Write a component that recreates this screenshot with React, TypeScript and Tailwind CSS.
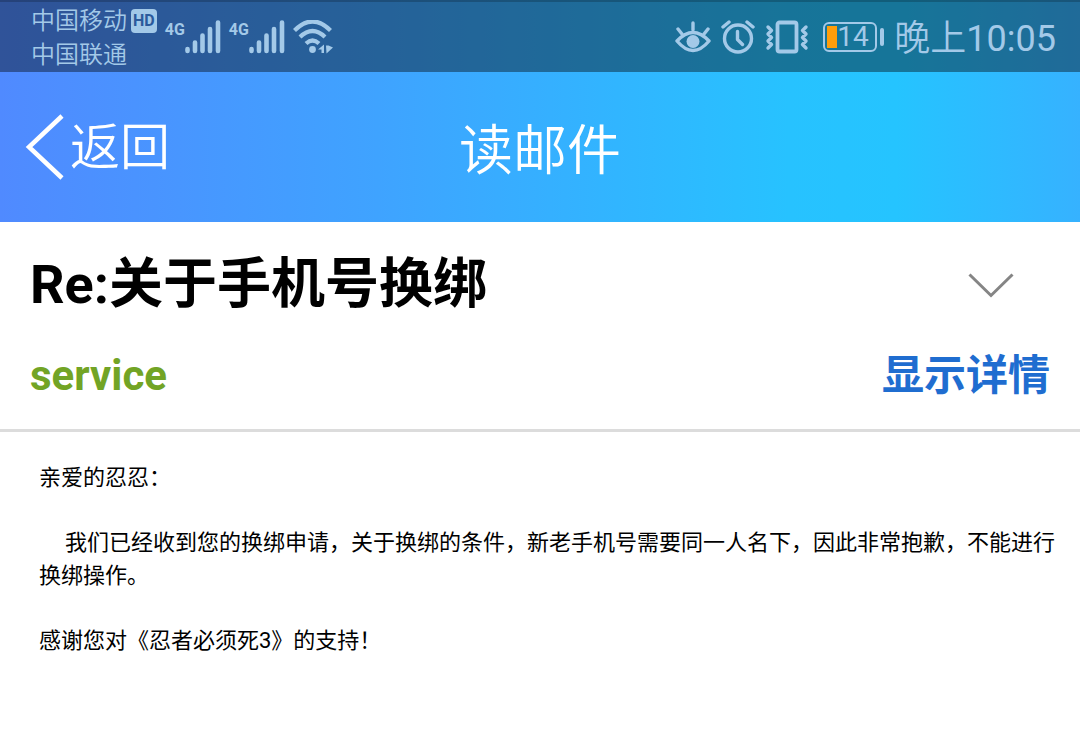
import type { ReactNode } from "react";

function Signal() {
  return (
    <div className="flex items-start">
      <span className="text-base leading-5 font-bold">4G</span>
      <svg width="36" height="34" viewBox="0 0 36 34" stroke="currentColor" strokeWidth="4.6" strokeLinecap="round" aria-hidden="true">
        <path d="M2.5 29v2M10 22.500v8.500M17.500 15.500v15.500M25 9v22M33 2.500v28.500" />
      </svg>
    </div>
  );
}

function WifiIcon() {
  return (
    <svg width="40" height="34" viewBox="0 0 40 34" fill="none" stroke="currentColor" strokeWidth="4" aria-hidden="true">
      <path d="M1.500 10.500Q19.500-7.500 37.500 10.500M7 17Q19.500 5 32 17M13 23.500Q19.500 17.500 26 23.500" strokeWidth="4.200" />
      <circle cx="19.500" cy="29.500" r="3.400" fill="currentColor" stroke="none" />
      <path d="M25 29.500l6-5v8.500h-2.500v-3.500zM33 25.500h2.500l4.500 2-6.500 6z" fill="currentColor" stroke="none" />
    </svg>
  );
}

function EyeIcon() {
  return (
    <svg width="36" height="34" viewBox="0 0 36 34" fill="none" stroke="currentColor" strokeWidth="3.400" strokeLinecap="round" strokeLinejoin="round" aria-hidden="true">
      <path d="M2 21Q18 4 34 21Q18 40 2 21zM18 3v7M3 9l4 5M33 9l-4 5" />
      <circle cx="18" cy="21.500" r="6.500" fill="currentColor" stroke="none" />
    </svg>
  );
}

function AlarmIcon() {
  return (
    <svg width="34" height="34" viewBox="0 0 34 34" fill="none" stroke="currentColor" strokeWidth="3.400" strokeLinecap="round" strokeLinejoin="round" aria-hidden="true">
      <circle cx="17" cy="18.500" r="13.500" />
      <path d="M2 7l6-5M26 2l6 5M16.500 11.500v8l5 5" />
    </svg>
  );
}

function VibrateIcon() {
  return (
    <svg width="44" height="34" viewBox="0 0 44 34" fill="none" stroke="currentColor" strokeWidth="3.400" strokeLinecap="round" strokeLinejoin="round" aria-hidden="true">
      <rect x="12.500" y="2.500" width="19" height="29" rx="2" strokeWidth="3.800" />
      <path d="M3 7l3.500 3.500-3.500 3.500 3.500 3.500-3.500 3.500 3.500 3.500-3.500 3.500M41 7l-3.500 3.500 3.500 3.500-3.500 3.500 3.500 3.500-3.500 3.500 3.500 3.500" />
    </svg>
  );
}

function Battery({ level }: { level: number }) {
  return (
    <div className="ml-1 flex items-center gap-[3px]">
      <div className="flex h-[30px] w-[54px] items-center rounded-md border-2 border-current px-0.5">
        <div className="h-[22px] w-[10px] bg-[#ff9d0a]" />
        <span className="text-[28px] leading-none">{level}</span>
      </div>
      <div className="h-[18px] w-1 rounded-sm bg-current" />
    </div>
  );
}

function Paragraph({ children, indent }: { children: ReactNode; indent?: boolean }) {
  return <p className={indent ? "indent-[26px]" : ""}>{children}</p>;
}

export default function App() {
  return (
    <div className="min-h-screen bg-white font-[Roboto,'Noto_Sans_CJK_SC',sans-serif] text-black" lang="zh-CN">
      <div className="bg-linear-[90deg,#508aff_0%,#3fa3ff_35%,#27c2ff_73%,#25c4ff_83%,#36b2ff_100%]">
        {/* Status bar */}
        <div className="flex h-[72px] items-center justify-between border-t-2 border-black/20 bg-black/40 pr-6 pl-[31px] text-[#a3c9e8]">
          <div className="flex items-center gap-2">
            <div className="pt-0.5 text-2xl leading-[34px] font-[350]">
              <div className="flex items-center gap-1">
                <span>中国移动</span>
                <span className="rounded bg-current px-0.5">
                  <span className="block text-base leading-6 font-bold text-[#2b5a9c]">HD</span>
                </span>
              </div>
              <div>中国联通</div>
            </div>
            <Signal />
            <Signal />
            <WifiIcon />
          </div>
          <div className="flex items-center gap-2.5">
            <EyeIcon />
            <AlarmIcon />
            <VibrateIcon />
            <Battery level={14} />
            <span className="pt-1 text-[36px] leading-none font-[350]">
              晚上<span className="font-normal">10:05</span>
            </span>
          </div>
        </div>

        {/* Navigation */}
        <header className="grid h-[150px] grid-cols-3 items-center px-6 text-white">
          <button className="flex items-center gap-1.5 justify-self-start text-[50px] leading-none font-[350]">
            <svg width="40" height="66" viewBox="0 0 40 66" fill="none" stroke="currentColor" strokeWidth="4.500" aria-hidden="true">
              <path d="M38 2L5 33l33 31" />
            </svg>
            <span className="pt-0.5">返回</span>
          </button>
          <h1 className="pt-2.5 text-center text-[54px] leading-none font-[350]">读邮件</h1>
        </header>
      </div>

      <main>
        <section className="border-b-3 border-[#dcdcdc] px-[30px] pt-[25px] pb-[22px]">
          <div className="flex items-center justify-between">
            <h2 className="text-[54px] leading-[76px] font-bold">Re:关于手机号换绑</h2>
            <button className="mr-9 pt-0.5" aria-label="展开">
              <svg width="46" height="26" viewBox="0 0 46 26" fill="none" stroke="#858585" strokeWidth="3" aria-hidden="true">
                <path d="M1.500 1.500L23 22.500l21.500-21" />
              </svg>
            </button>
          </div>
          <div className="mt-[22px] flex items-center justify-between text-[42px] leading-[62px] font-bold">
            <span className="text-[#72a425]">service</span>
            <a href="#details" className="text-[#1f6dd0]">显示详情</a>
          </div>
        </section>

        <article className="space-y-8 py-[29px] pr-4 pl-[39px] text-[22px] leading-[33px]">
          <Paragraph>亲爱的忍忍：</Paragraph>
          <Paragraph indent>
            我们已经收到您的换绑申请，关于换绑的条件，新老手机号需要同一人名下，因此非常抱歉，不能进行换绑操作。
          </Paragraph>
          <Paragraph>感谢您对《忍者必须死3》的支持！</Paragraph>
        </article>
      </main>
    </div>
  );
}
